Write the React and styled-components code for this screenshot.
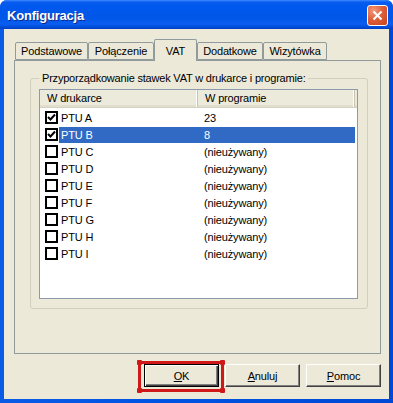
import styled, { createGlobalStyle } from 'styled-components';

const GlobalStyle = createGlobalStyle`
  body {
    margin: 0;
    background: #ffffff;
    font-family: "Liberation Sans", Arial, sans-serif;
  }
`;

const Window = styled.div`
  width: 393px;
  height: 403px;
  display: flex;
  flex-direction: column;
  background: linear-gradient(to right, #0a5be6 0%, #0054e3 40%, #0049d6 100%);
  border-radius: 7px 7px 0 0;
  overflow: hidden;
  box-sizing: border-box;
`;

const TitleBar = styled.div`
  height: 29px;
  flex: none;
  display: flex;
  align-items: center;
  justify-content: space-between;
  padding: 0 5px 0 7px;
  box-sizing: border-box;
  background: linear-gradient(
    to bottom,
    #3d8dff 0px,
    #0b5cf0 2px,
    #0058ee 6px,
    #0057e8 18px,
    #0a5ef0 24px,
    #0047d0 28px,
    #003cbf 29px
  );
`;

const Title = styled.span`
  color: #ffffff;
  font-weight: bold;
  font-size: 13px;
  letter-spacing: -0.2px;
  text-shadow: 1px 1px 0 #0a2a8a;
  padding-top: 1px;
`;

const CloseButton = styled.div`
  width: 21px;
  height: 21px;
  box-sizing: border-box;
  border: 1px solid #ffffff;
  border-radius: 3px;
  background: radial-gradient(circle at 30% 25%, #f19a7c 0%, #e0603a 45%, #c5431e 100%);
  display: flex;
  align-items: center;
  justify-content: center;
  margin-top: 1px;
`;

const Client = styled.div`
  flex: 1;
  margin: 0 4px 4px 4px;
  background: #ece9d8;
  padding: 10px 8px 0 10px;
  display: flex;
  flex-direction: column;
  color: #000000;
  font-size: 11px;
  letter-spacing: -0.15px;
`;

const TabStrip = styled.div`
  display: flex;
  align-items: flex-end;
  height: 21px;
  padding-left: 1px;
`;

const Tab = styled.div`
  width: ${(p) => p.$w}px;
  height: ${(p) => (p.$active ? 22 : 18)}px;
  box-sizing: border-box;
  border: 1px solid #919b9c;
  border-bottom: ${(p) => (p.$active ? 'none' : '1px solid #919b9c')};
  border-radius: 2px 2px 0 0;
  background: #ece9d8;
  margin-bottom: ${(p) => (p.$active ? -1 : 0)}px;
  position: relative;
  z-index: ${(p) => (p.$active ? 2 : 1)};
  display: flex;
  align-items: center;
  justify-content: center;
  font-size: 11px;
  white-space: nowrap;
`;

const Panel = styled.div`
  width: 367px;
  height: 294px;
  box-sizing: border-box;
  border: 1px solid #919b9c;
  padding: 11px 12px 0 15px;
`;

const Group = styled.fieldset`
  margin: 0;
  padding: 4px 9px 9px 8px;
  min-width: 0;
  border: 1px solid #d0d0bf;
  border-radius: 3px;
`;

const Caption = styled.legend`
  padding: 0 2px 0 3px;
  font-size: 11px;
  line-height: 13px;
  color: #000000;
  letter-spacing: -0.2px;
`;

const List = styled.div`
  height: 210px;
  box-sizing: border-box;
  border: 1px solid #8c9aab;
  background: #ffffff;
`;

const Header = styled.div`
  display: flex;
  height: 18px;
  box-sizing: border-box;
  background: #ebeadb;
  border-bottom: 1px solid #d6d2c2;
  box-shadow: inset 0 -2px 0 #e2decd;
  margin-bottom: 1px;
`;

const HeaderCell = styled.div`
  width: ${(p) => p.$w}px;
  box-sizing: border-box;
  padding-left: 7px;
  display: flex;
  align-items: center;
  border-right: 1px solid #c7c5b2;
  box-shadow: inset -1px 0 0 #ffffff;
  padding-bottom: 1px;
`;

const Row = styled.div`
  display: flex;
  height: 17px;
  align-items: center;
`;

const CheckCell = styled.div`
  width: 19px;
  padding-left: 5px;
  box-sizing: border-box;
  display: flex;
  align-items: center;
`;

const Box = styled.div`
  width: 13px;
  height: 13px;
  box-sizing: border-box;
  border: 2px solid #000000;
  background: #ffffff;
  display: flex;
  align-items: center;
  justify-content: center;
`;

const Selection = styled.div`
  display: flex;
  height: 16px;
  align-items: center;
  background: ${(p) => (p.$selected ? '#316ac5' : 'transparent')};
  color: ${(p) => (p.$selected ? '#ffffff' : '#000000')};
`;

const Cell = styled.div`
  width: ${(p) => p.$w}px;
  box-sizing: border-box;
  padding-left: ${(p) => p.$pad}px;
  white-space: nowrap;
`;

const ButtonRow = styled.div`
  display: flex;
  justify-content: flex-end;
  gap: 6px;
  margin-top: 10px;
`;

const ButtonWrap = styled.div`
  position: relative;
`;

const Button = styled.div`
  width: 75px;
  height: 23px;
  box-sizing: border-box;
  background: #ece9d8;
  border: 1px solid;
  border-color: ${(p) => (p.$default ? '#000000' : '#ffffff #404040 #404040 #ffffff')};
  box-shadow: ${(p) =>
    p.$default
      ? 'inset 1px 1px 0 #ffffff, inset -1px -1px 0 #404040, inset -2px -2px 0 #808080'
      : 'inset -1px -1px 0 #808080'};
  display: flex;
  align-items: center;
  justify-content: center;
  font-size: 11px;

  u {
    text-decoration: underline;
  }
`;

const Marker = styled.div`
  position: absolute;
  left: -6px;
  top: -3px;
  right: -5px;
  bottom: -5px;
  border: 3px solid #d01818;
  pointer-events: none;
`;

const Handle = styled.div`
  position: absolute;
  width: 5px;
  height: 5px;
  background: #d01818;
  border-radius: 1px;
  ${(p) => (p.$top ? 'top: -4px;' : 'bottom: -6px;')}
  ${(p) => (p.$left ? 'left: -7px;' : 'right: -6px;')}
`;

const tabs = [
  { label: 'Podstawowe', w: 73 },
  { label: 'Połączenie', w: 66 },
  { label: 'VAT', w: 43, active: true },
  { label: 'Dodatkowe', w: 66 },
  { label: 'Wizytówka', w: 64 },
];

const rows = [
  { name: 'PTU A', value: '23', checked: true },
  { name: 'PTU B', value: '8', checked: true, selected: true },
  { name: 'PTU C', value: '(nieużywany)' },
  { name: 'PTU D', value: '(nieużywany)' },
  { name: 'PTU E', value: '(nieużywany)' },
  { name: 'PTU F', value: '(nieużywany)' },
  { name: 'PTU G', value: '(nieużywany)' },
  { name: 'PTU H', value: '(nieużywany)' },
  { name: 'PTU I', value: '(nieużywany)' },
];

const Check = () => (
  <svg width="9" height="9" viewBox="0 0 9 9">
    <path d="M1 4 L3.5 6.5 L8 1.5" fill="none" stroke="#000" strokeWidth="2" />
  </svg>
);

export default function App() {
  return (
    <>
      <GlobalStyle />
      <Window>
        <TitleBar>
          <Title>Konfiguracja</Title>
          <CloseButton>
            <svg width="11" height="11" viewBox="0 0 11 11">
              <path d="M1.5 1.5 L9.5 9.5 M9.5 1.5 L1.5 9.5" stroke="#fff" strokeWidth="2" />
            </svg>
          </CloseButton>
        </TitleBar>
        <Client>
          <TabStrip>
            {tabs.map((t) => (
              <Tab key={t.label} $w={t.w} $active={t.active}>
                {t.label}
              </Tab>
            ))}
          </TabStrip>
          <Panel>
            <Group>
              <Caption>Przyporządkowanie stawek VAT w drukarce i programie:</Caption>
              <List>
                <Header>
                  <HeaderCell $w={158}>W drukarce</HeaderCell>
                  <HeaderCell $w={157}>W programie</HeaderCell>
                </Header>
                {rows.map((r) => (
                  <Row key={r.name}>
                    <CheckCell>
                      <Box>{r.checked && <Check />}</Box>
                    </CheckCell>
                    <Selection $selected={r.selected}>
                      <Cell $w={139} $pad={2}>
                        {r.name}
                      </Cell>
                      <Cell $w={157} $pad={6}>
                        {r.value}
                      </Cell>
                    </Selection>
                  </Row>
                ))}
              </List>
            </Group>
          </Panel>
          <ButtonRow>
            <ButtonWrap>
              <Button $default>
                <span>
                  <u>O</u>K
                </span>
              </Button>
              <Marker />
              <Handle $top $left />
              <Handle $top />
              <Handle $left />
              <Handle />
            </ButtonWrap>
            <Button>
              <span>
                <u>A</u>nuluj
              </span>
            </Button>
            <Button>
              <span>
                <u>P</u>omoc
              </span>
            </Button>
          </ButtonRow>
        </Client>
      </Window>
    </>
  );
}
